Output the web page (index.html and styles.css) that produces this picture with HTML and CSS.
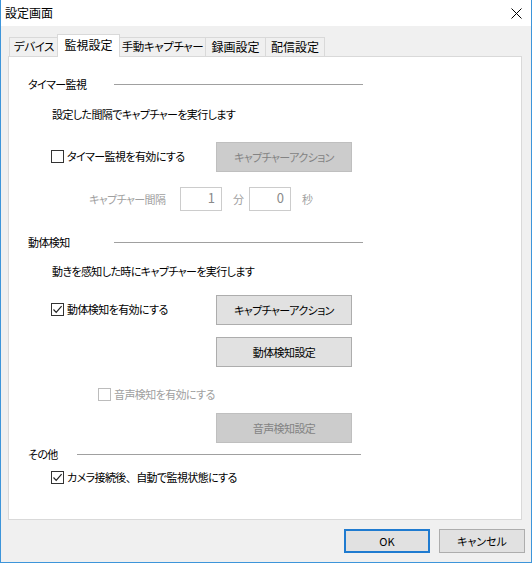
FILE: index.html
```html
<!DOCTYPE html>
<html lang="ja">
<head>
<meta charset="utf-8">
<title>設定画面</title>
<link rel="stylesheet" href="styles.css">
</head>
<body>
<div class="window">
  <div class="titlebar">
    <span class="title">設定画面</span>
    <svg class="close" width="11" height="11" viewBox="0 0 11 11"><path d="M0.5 0.5 L10.5 10.5 M10.5 0.5 L0.5 10.5" stroke="#000" stroke-width="1" fill="none"/></svg>
  </div>
  <div class="body">
    <div class="tabs">
      <div class="tab t1 kana">デバイス</div>
      <div class="tab active">監視設定</div>
      <div class="tab t3 kana">手動キャプチャー</div>
      <div class="tab t4">録画設定</div>
      <div class="tab t5">配信設定</div>
    </div>
    <div class="panel">
      <div class="heading"><span class="heading-label wide">タイマー監視</span><span class="rule"></span></div>
      <div class="desc">設定した間隔でキャプチャーを実行します</div>
      <div class="row row1">
        <div class="check"><span class="box"></span><span>タイマー監視を有効にする</span></div>
        <div class="btn disabled">キャプチャーアクション</div>
      </div>
      <div class="interval">
        <span class="interval-label">キャプチャー間隔</span>
        <span class="field">1</span><span class="unit">分</span>
        <span class="field f2">0</span><span class="unit">秒</span>
      </div>

      <div class="heading h2"><span class="heading-label wide">動体検知</span><span class="rule"></span></div>
      <div class="desc d2">動きを感知した時にキャプチャーを実行します</div>
      <div class="row row2">
        <div class="check"><span class="box checked"><svg width="11" height="11" viewBox="0 0 11 11"><path d="M1.5 5.5 L4.2 8.3 L9.6 2.2" stroke="#222" stroke-width="1.2" fill="none"/></svg></span><span>動体検知を有効にする</span></div>
        <div class="btn">キャプチャーアクション</div>
      </div>
      <div class="btn solo b2">動体検知設定</div>
      <div class="check audio muted"><span class="box off"></span><span>音声検知を有効にする</span></div>
      <div class="btn solo disabled b3">音声検知設定</div>

      <div class="heading h3"><span class="heading-label narrow">その他</span><span class="rule"></span></div>
      <div class="check auto"><span class="box checked"><svg width="11" height="11" viewBox="0 0 11 11"><path d="M1.5 5.5 L4.2 8.3 L9.6 2.2" stroke="#222" stroke-width="1.2" fill="none"/></svg></span><span>カメラ接続後<span class="wide-punct">、</span>自動で監視状態にする</span></div>
    </div>
    <div class="footer">
      <div class="btn ok">OK</div>
      <div class="btn cancel">キャンセル</div>
    </div>
  </div>
</div>
</body>
</html>
```

FILE: styles.css
```css
* { box-sizing: border-box; }
html, body { margin: 0; padding: 0; background: #ffffff; }
body {
  font-family: "Noto Sans CJK JP", "Noto Sans", sans-serif;
  font-size: 11px;
  letter-spacing: -0.6px;
  line-height: 16px;
  color: #000;
  font-feature-settings: "palt";
}
.window {
  width: 532px;
  height: 563px;
  border: 1px solid #3d95da;
  border-top: none;
  background: #f0f0f0;
  display: flex;
  flex-direction: column;
}
.titlebar {
  height: 26px;
  background: #fff;
  display: flex;
  align-items: center;
  justify-content: space-between;
  padding: 0 9px 0 4px;
}
.title { font-size: 12px; letter-spacing: 0; line-height: 16px; }
.close { display: block; }
.body {
  padding: 8px 6px 0 7px;
  flex: 1;
}
.tabs {
  display: flex;
  align-items: flex-end;
  height: 22px;
  padding-left: 1px;
}
.tab {
  height: 19px;
  border: 1px solid #d9d9d9;
  border-bottom: none;
  background: #f0f0f0;
  text-align: center;
  line-height: 17px;
  margin-left: -1px;
  white-space: nowrap;
  font-size: 12px;
  letter-spacing: 0;
}
.tab.kana { font-size: 11.5px; letter-spacing: -0.4px; }
.tab.t1 { width: 50px; margin-left: 0; }
.tab.active {
  width: 63px;
  height: 23px;
  margin-left: -2px;
  margin-bottom: -1px;
  background: #fff;
  position: relative;
  z-index: 2;
  line-height: 20px;
}
.tab.t3 { width: 87px; }
.tab.t4 { width: 61px; }
.tab.t5 { width: 60px; }
.panel {
  width: 514px;
  height: 464px;
  border: 1px solid #d9d9d9;
  background: #fff;
  padding: 19px 0 0 19px;
}
.heading {
  display: flex;
  align-items: center;
  width: 335px;
  height: 16px;
}
.heading-label { flex: none; }
.heading-label.wide { width: 86px; }
.heading-label.narrow { width: 49px; }
.rule { flex: 1; height: 1px; background: #a0a0a0; }
.heading.h2 { margin-top: 23px; }
.heading.h3 { margin-top: 3px; width: 333px; }
.desc { margin: 14px 0 0 24px; }
.desc.d2 { margin-top: 13px; }
.row {
  display: grid;
  grid-template-columns: 165px 136px;
  align-items: start;
  margin-left: 23px;
}
.row1 { margin-top: 20px; }
.row2 { margin-top: 16px; }
.row .check { margin-top: 6px; }
.check {
  display: flex;
  align-items: center;
  gap: 3px;
  height: 16px;
  white-space: nowrap;
}
.wide-punct { font-feature-settings: normal; }
.box {
  width: 13px;
  height: 13px;
  border: 1px solid #333;
  background: #fff;
  flex: none;
  display: flex;
  align-items: center;
  justify-content: center;
}
.box svg { display: block; }
.box.off { border-color: #bcbcbc; }
.check.muted { color: #a0a0a0; }
.check.audio { margin: 19px 0 0 70px; }
.check.auto { margin: 7px 0 0 23px; }
.btn {
  height: 30px;
  width: 136px;
  background: #e1e1e1;
  border: 1px solid #adadad;
  display: flex;
  align-items: center;
  justify-content: center;
  white-space: nowrap;
}
.btn.disabled {
  background: #cccccc;
  border-color: #bfbfbf;
  color: #838383;
}
.btn.solo { margin-left: 188px; }
.btn.b2 { margin-top: 12px; }
.btn.b3 { margin-top: 11px; }
.interval {
  display: flex;
  align-items: center;
  margin: 15px 0 0 61px;
  height: 24px;
  color: #a0a0a0;
}
.interval-label { width: 91px; }
.field {
  width: 42px;
  height: 24px;
  border: 1px solid #cccccc;
  background: #fff;
  text-align: right;
  padding-right: 6px;
  line-height: 20px;
  color: #8a8a8a;
  font-size: 13px;
  letter-spacing: 0;
}
.unit { margin: 0 4px 0 11px; width: 12px; }
.footer {
  display: flex;
  justify-content: flex-end;
  gap: 9px;
  margin-top: 9px;
}
.footer .btn { width: 86px; height: 24px; letter-spacing: 0; }
.btn.ok { border: 2px solid #1f7bd0; }
```
